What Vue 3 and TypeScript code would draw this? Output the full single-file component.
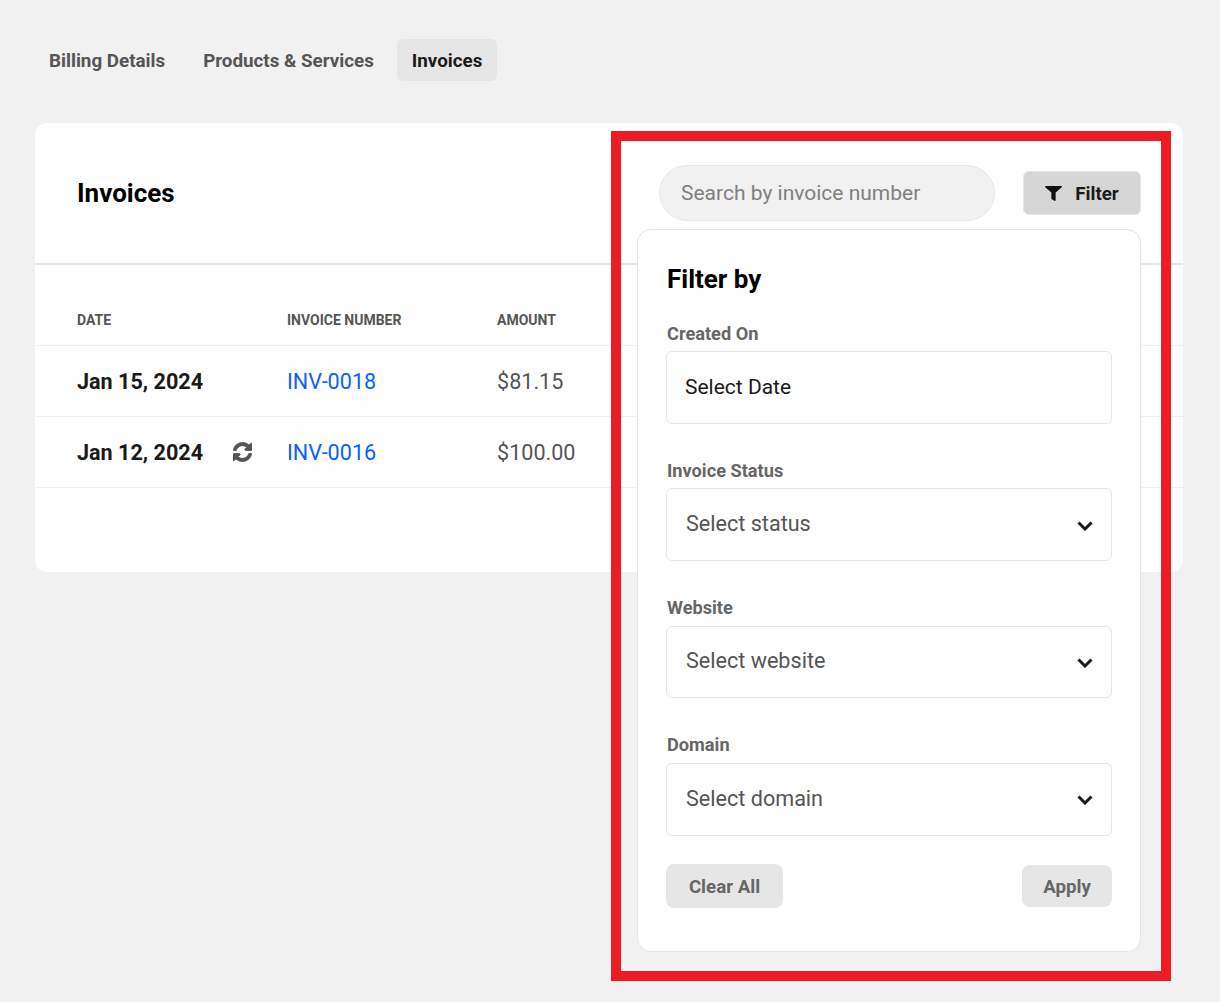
<script setup lang="ts">
const tabs = [
  { label: 'Billing Details', active: false },
  { label: 'Products & Services', active: false },
  { label: 'Invoices', active: true },
]
const rows = [
  { date: 'Jan 15, 2024', recurring: false, number: 'INV-0018', amount: '$81.15' },
  { date: 'Jan 12, 2024', recurring: true, number: 'INV-0016', amount: '$100.00' },
]
const selects = [
  { label: 'Invoice Status', placeholder: 'Select status' },
  { label: 'Website', placeholder: 'Select website' },
  { label: 'Domain', placeholder: 'Select domain' },
]
</script>

<template>
  <div class="page">
    <nav class="tabs">
      <a v-for="t in tabs" :key="t.label" class="tab" :class="{ active: t.active }">{{ t.label }}</a>
    </nav>

    <section class="card">
      <header class="card-head">
        <h1 class="card-title">Invoices</h1>
        <div class="tools">
          <div class="search">Search by invoice number</div>
          <button class="filter-btn">
            <svg class="funnel" viewBox="0 0 512 512" preserveAspectRatio="none"><path fill="currentColor" d="M487.976 0H24.028C2.71 0-8.047 25.866 7.058 40.971L192 225.941V432c0 7.831 3.821 15.17 10.237 19.662l80 55.98C298.02 518.69 320 507.493 320 487.98V225.941l184.947-184.97C520.021 25.896 509.338 0 487.976 0z"/></svg>
            Filter
          </button>
        </div>
      </header>

      <div class="thead">
        <span>DATE</span><span>INVOICE NUMBER</span><span>AMOUNT</span>
      </div>
      <div v-for="r in rows" :key="r.number" class="row">
        <span class="date">
          {{ r.date }}
          <svg v-if="r.recurring" class="sync" viewBox="128 128 1536 1536"><path fill="currentColor" d="M1639 1056q0 5-1 7-64 268-268 434.5t-478 166.5q-146 0-282.5-55t-243.5-157l-129 129q-19 19-45 19t-45-19-19-45v-448q0-26 19-45t45-19h448q26 0 45 19t19 45-19 45l-137 137q71 66 161 102t187 36q134 0 250-65t186-179q11-17 53-117 8-23 30-23h192q13 0 22.5 9.5t9.5 22.5zm25-800v448q0 26-19 45t-45 19h-448q-26 0-45-19t-19-45 19-45l138-138q-148-137-349-137-134 0-250 65t-186 179q-11 17-53 117-8 23-30 23h-199q-13 0-22.5-9.5t-9.5-22.5v-7q65-268 270-434.5t480-166.5q146 0 284 55.5t245 156.5l130-129q19-19 45-19t45 19 19 45z" stroke="currentColor" stroke-width="70"/></svg>
        </span>
        <a class="num">{{ r.number }}</a>
        <span class="amount">{{ r.amount }}</span>
      </div>

      <aside class="popover">
        <h2 class="pop-title">Filter by</h2>
        <div class="field">
          <label class="label">Created On</label>
          <div class="control date-control">Select Date</div>
        </div>
        <div v-for="s in selects" :key="s.label" class="field">
          <label class="label">{{ s.label }}</label>
          <div class="control select-control">
            <span>{{ s.placeholder }}</span>
            <svg class="chev" viewBox="0 0 16 10"><path d="M1.5 1.5 8 8l6.5-6.5" fill="none" stroke="currentColor" stroke-width="3"/></svg>
          </div>
        </div>
        <div class="actions">
          <button class="ghost clear">Clear All</button>
          <button class="ghost apply">Apply</button>
        </div>
      </aside>
    </section>

    <div class="frame"></div>
  </div>
</template>

<style>
html, body { margin: 0; background: #f1f1f1; }
</style>

<style scoped>
.page {
  position: relative;
  box-sizing: border-box;
  height: 1002px;
  padding: 39px 37px 0 35px;
  font-family: Roboto, "Liberation Sans", sans-serif;
  background: #f1f1f1;
  overflow: hidden;
}
.tabs { display: flex; gap: 8px; height: 42px; margin: 0 0 42px -1px; }
.tab {
  display: flex;
  align-items: center;
  padding: 1px 15px 0;
  border-radius: 6px;
  font-size: 18.8px;
  font-weight: 700;
  color: #555;
}
.tab.active { background: #e6e6e6; color: #1a1a1a; }
.card {
  position: relative;
  height: 449px;
  background: #fff;
  border-radius: 12px;
}
.card-head {
  display: flex;
  align-items: center;
  justify-content: space-between;
  padding: 42px;
  border-bottom: 2px solid #e6e6e6;
  height: 142px;
  box-sizing: border-box;
}
.card-title { margin: 0; font-size: 26px; font-weight: 700; color: #000; }
.tools { display: flex; align-items: center; gap: 28px; }
.search {
  box-sizing: border-box;
  width: 336px;
  height: 56px;
  padding: 0 21px;
  display: flex;
  align-items: center;
  background: #f1f1f1;
  border: 1px solid #e6e6e6;
  border-radius: 28px;
  font-size: 21px;
  color: #808080;
}
.filter-btn {
  box-sizing: border-box;
  width: 118px;
  height: 44px;
  padding: 1px 0 0;
  display: flex;
  align-items: center;
  justify-content: center;
  gap: 13px;
  background: #d5d5d5;
  border: 1px solid #e6e6e6;
  border-radius: 6px;
  font: 700 18.7px Roboto, sans-serif;
  color: #1a1a1a;
}
.funnel { width: 17px; height: 15px; color: #111; }
.thead, .row {
  display: grid;
  grid-template-columns: 210px 210px 1fr;
  padding-left: 42px;
  border-bottom: 1px solid #f1f1f1;
}
.thead {
  height: 81px;
  box-sizing: border-box;
  padding-top: 47px;
  font-size: 14px;
  font-weight: 700;
  color: #555;
}
.row { height: 71px; box-sizing: border-box; align-items: center; font-size: 21.6px; }
.date { display: flex; align-items: center; font-weight: 700; color: #1a1a1a; }
.sync { width: 19px; height: 20px; margin-left: 30px; color: #555; }
.num { color: #0b5fff; }
.amount { color: #555; }
.popover {
  position: absolute;
  top: 106px;
  right: 42px;
  box-sizing: border-box;
  width: 504px;
  height: 723px;
  padding: 35px 29px 0;
  background: #fff;
  border: 1px solid #e6e6e6;
  border-radius: 14px;
}
.pop-title { margin: 0 0 30.8px; font-size: 26px; font-weight: 700; line-height: 28px; color: #000; }
.field { margin-bottom: 37px; }
.label {
  display: block;
  margin-bottom: 7.4px;
  font-size: 18.2px;
  line-height: 20px;
  font-weight: 700;
  color: #666;
}
.control {
  box-sizing: border-box;
  height: 72.8px;
  margin: 0 -1px;
  display: flex;
  align-items: center;
  border: 1px solid #e6e6e6;
  border-radius: 6px;
}
.date-control { padding: 0 0 1px 18px; color: #1a1a1a; font-size: 21px; }
.select-control {
  justify-content: space-between;
  padding: 0 18px 2px 19px;
  color: #555;
  font-size: 21.6px;
}
.chev { width: 16px; height: 10px; margin-top: 4px; color: #1a1a1a; }
.actions { display: flex; align-items: center; justify-content: space-between; margin: -8.6px -1px 0; }
.ghost {
  border: 0;
  padding: 2px 0 0;
  background: #e6e6e6;
  border-radius: 8px;
  font: 700 18.7px Roboto, sans-serif;
  color: #666;
}
.clear { width: 117px; height: 44px; }
.apply { width: 90px; height: 42px; }
.frame {
  position: absolute;
  left: 611px;
  top: 131px;
  width: 560px;
  height: 850px;
  box-sizing: border-box;
  border: 10px solid #ed1c24;
  pointer-events: none;
}
</style>
